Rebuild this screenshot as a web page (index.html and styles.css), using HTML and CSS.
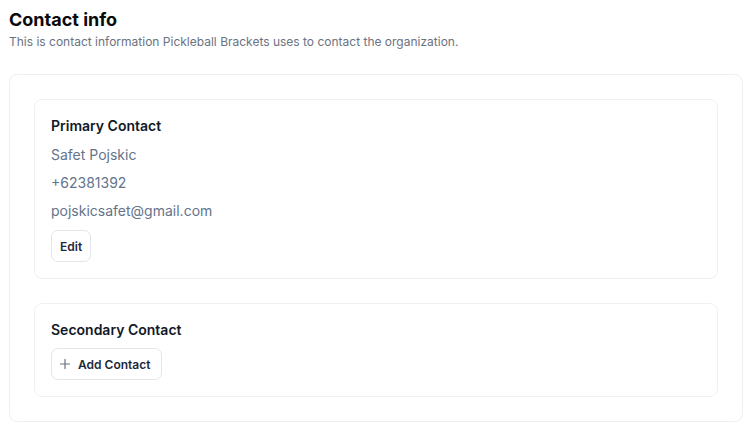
FILE: index.html
```html
<!DOCTYPE html>
<html lang="en">
<head>
<meta charset="utf-8">
<title>Contact info</title>
<link rel="stylesheet" href="styles.css">
</head>
<body>
<main class="page">
  <header class="page-header">
    <h1 class="title">Contact info</h1>
    <p class="subtitle">This is contact information Pickleball Brackets uses to contact the organization.</p>
  </header>
  <section class="outer-card">
    <div class="contact-card">
      <h2 class="contact-heading">Primary Contact</h2>
      <div class="details">
        <p class="contact-line">Safet Pojskic</p>
        <p class="contact-line">+62381392</p>
        <p class="contact-line">pojskicsafet@gmail.com</p>
      </div>
      <div><button class="btn" type="button">Edit</button></div>
    </div>
    <div class="contact-card">
      <h2 class="contact-heading">Secondary Contact</h2>
      <div>
        <button class="btn btn-icon" type="button">
          <svg class="plus" width="10" height="10" viewBox="0 0 10 10" aria-hidden="true"><path d="M5 0.5V9.5M0.5 5H9.5" stroke="#6b7280" stroke-width="1.2" fill="none" stroke-linecap="round"/></svg>
          <span>Add Contact</span>
        </button>
      </div>
    </div>
  </section>
</main>
</body>
</html>
```
FILE: styles.css
```css
* { box-sizing: border-box; }
html, body { margin: 0; padding: 0; background: #ffffff; }
body { font-family: Inter, "Noto Sans", "Liberation Sans", sans-serif; color: #111827; }
.page { padding: 8px 9px 0 9px; }
.title { margin: 0; font-size: 18px; line-height: 24px; font-weight: 700; color: #0a0a0a; }
.subtitle { margin: 0; font-size: 12px; line-height: 20px; color: #6b7280; }
.outer-card {
  margin-top: 22px;
  border: 1px solid #eef0f3;
  border-radius: 8px;
  padding: 24px;
  display: flex;
  flex-direction: column;
  gap: 24px;
  width: 734px;
}
.contact-card {
  border: 1px solid #eef0f3;
  border-radius: 8px;
  padding: 16px;
  display: flex;
  flex-direction: column;
  gap: 8px;
}
.contact-heading { margin: 0; font-size: 14px; line-height: 20px; font-weight: 600; color: #111827; }
.details { display: flex; flex-direction: column; gap: 6px; }
.contact-line { margin: 0; font-size: 14px; line-height: 22px; color: #64748b; }
.btn {
  height: 32px;
  padding: 0 8px;
  border: 1px solid #e2e5ea;
  border-radius: 7px;
  background: #fff;
  font-family: inherit;
  font-size: 12px;
  font-weight: 600;
  color: #1e293b;
  display: inline-flex;
  align-items: center;
  gap: 8px;
}
.btn-icon { padding: 0 11px 0 8px; }
.plus { display: block; }
```
